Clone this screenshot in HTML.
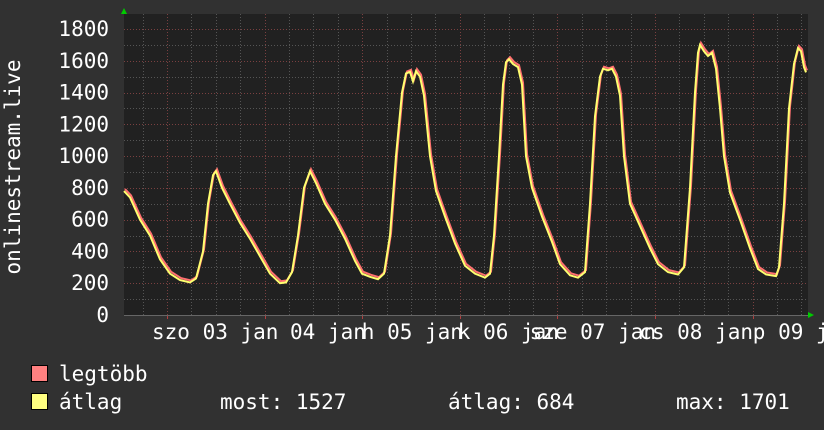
<!DOCTYPE html>
<html><head><meta charset="utf-8"><style>
body{margin:0;background:#313131;width:824px;height:430px;overflow:hidden}
svg{display:block}
text{font-family:"DejaVu Sans Mono","Liberation Mono",monospace;fill:#fff}
</style></head><body>
<svg id="s" width="824" height="430" xmlns="http://www.w3.org/2000/svg">
<rect width="824" height="430" fill="#313131"/>
<rect x="124" y="14" width="684" height="301" fill="#212121"/>
<g id="grid"></g>
<g id="lines"></g>
<polygon points="121,14 127,14 124,8" fill="#0c0"/>
<polygon points="808,312 808,318 814,315" fill="#0c0"/>
<g font-size="21" text-anchor="end" id="yl"></g>
<text transform="translate(20,167) rotate(-90)" font-size="21" text-anchor="middle">onlinestream.live</text>
<g font-size="21" id="xl"></g>
<rect x="31.5" y="365.5" width="16" height="16" fill="#ff8080" stroke="#000"/>
<rect x="31.5" y="393.5" width="16" height="16" fill="#ffff80" stroke="#000"/>
<g font-size="21">
<text x="59" y="381">legtöbb</text>
<text x="59" y="409">átlag</text>
<text x="220" y="409">most: 1527</text>
<text x="448" y="409">átlag: 684</text>
<text x="676" y="409">max: 1701</text>
</g>
</svg>
<script>
var NS="http://www.w3.org/2000/svg";
function el(p,t,a,txt){var e=document.createElementNS(NS,t);for(var k in a)e.setAttribute(k,a[k]);if(txt)e.textContent=txt;p.appendChild(e);return e;}
var Y=function(v){return 315-v*0.1589;};
var g=document.getElementById('grid');
for(var v=100;v<=1800;v+=100){var y=Math.round(Y(v))+0.5;el(g,'line',{x1:124,x2:808,y1:y,y2:y,stroke:(v%200==0)?'#7a4040':'#555','stroke-dasharray':'1,2','stroke-width':1});}
for(var i=-1;i<30;i++){var x=Math.round(167+i*24.4)+0.5;if(x<124||x>808)continue;var maj=((i%4)+4)%4==0;el(g,'line',{x1:x,x2:x,y1:14,y2:315,stroke:maj?'#7a4040':'#555','stroke-dasharray':'1,2','stroke-width':1});if(maj)el(g,'line',{x1:x,x2:x,y1:315,y2:319,stroke:'#b04040'});}
el(g,'line',{x1:124,x2:808,y1:315.5,y2:315.5,stroke:'#666'});
var yl=document.getElementById('yl');
for(var v=0;v<=1800;v+=200)el(yl,'text',{x:109,y:Y(v)+7},String(v));
var P=[124,780,130,740,140,600,150,500,160,350,170,260,180,220,190,205,196,230,203,400,208,700,213,880,216,905,222,800,230,700,240,580,250,480,260,370,270,260,280,200,286,205,292,270,298,500,304,800,310,905,316,830,325,700,335,600,345,480,355,340,362,260,370,240,378,225,384,260,390,500,396,1000,402,1400,406,1520,410,1530,413,1470,416,1535,420,1500,424,1380,430,1000,436,780,445,620,455,450,465,310,475,260,485,235,490,260,494,500,499,1000,503,1450,506,1590,509,1610,513,1580,518,1560,522,1450,526,1000,532,800,542,620,552,460,560,320,570,250,578,235,585,270,590,700,595,1250,600,1500,603,1550,608,1540,612,1550,616,1500,620,1380,624,1000,630,700,640,560,650,420,658,320,668,270,678,255,684,300,690,800,695,1400,698,1650,700,1700,704,1660,708,1630,712,1650,716,1550,720,1300,724,1000,730,770,740,600,750,420,758,290,766,255,776,245,779,300,784,700,789,1300,794,1580,798,1680,801,1660,804,1560,806,1527];
function pts(dx,dy){var s=[];for(var i=0;i<P.length;i+=2)s.push((P[i]+dx)+','+(Y(P[i+1])+dy));return s.join(' ');}
var L=document.getElementById('lines');
el(L,'polyline',{points:pts(1,-2),fill:'none',stroke:'#ff7070','stroke-width':2});
el(L,'polyline',{points:pts(0,0),fill:'none',stroke:'#ffff70','stroke-width':2});
var xl=document.getElementById('xl');
var cw=12.6;
el(xl,'text',{x:152,y:339},'szo 03 jan');
el(xl,'text',{x:290,y:339},'04 jan');
var days=[['h',387,'05'],['k',483,'06'],['sze',580,'07'],['cs',677,'08'],['p',778,'09']];
days.forEach(function(d){el(xl,'text',{x:d[1]-(d[0].length+1)*cw,y:339},d[0]+' '+d[2]+' jan');});
</script>
</body></html>
